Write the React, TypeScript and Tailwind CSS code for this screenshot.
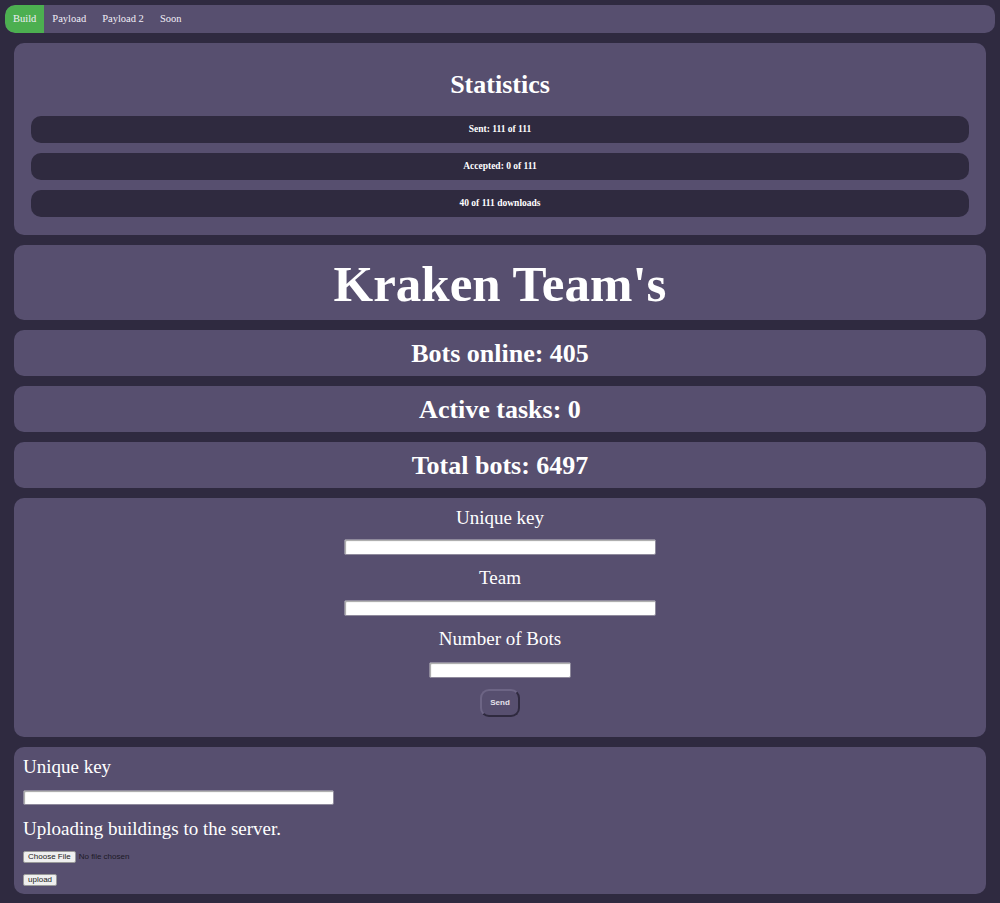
import React from "react";

const serif = { fontFamily: '"Liberation Serif", "Times New Roman", serif' };
const sans = { fontFamily: '"Liberation Sans", Arial, sans-serif' };

const tabs = ["Build", "Payload", "Payload 2", "Soon"];
const stats = ["Sent: 111 of 111", "Accepted: 0 of 111", "40 of 111 downloads"];
const counters = ["Bots online: 405", "Active tasks: 0", "Total bots: 6497"];

function TextInput({ className }: { className: string }) {
  return (
    <input
      type="text"
      className={`bg-white rounded-[2px] border border-[#8f8a9c] shadow-[inset_1px_1px_1px_rgba(0,0,0,0.35)] outline-none ${className}`}
    />
  );
}

export default function App() {
  return (
    <div className="min-h-[903px] bg-[#2f2a40] text-white pt-[5px] pb-[10px]" style={serif}>
      {/* nav */}
      <nav className="mx-[5px] h-[28px] bg-[#574f6f] rounded-[10px] flex items-stretch overflow-hidden text-[10.5px]">
        {tabs.map((t, i) => (
          <a
            key={t}
            className={`flex items-center px-[8px] text-[#f1eef7] ${i === 0 ? "bg-[#4caf50] rounded-l-[10px]" : ""}`}
          >
            {t}
          </a>
        ))}
      </nav>

      <div className="mx-[14px] mt-[10px] flex flex-col gap-[10px]">
        {/* statistics */}
        <section className="bg-[#574f6f] rounded-[10px] pt-[26px] pb-[18px] px-[17px]">
          <h2 className="h-[32px] leading-[32px] text-center text-[26px] font-bold">Statistics</h2>
          <div className="mt-[15px] flex flex-col gap-[10px]">
            {stats.map((s) => (
              <div
                key={s}
                className="h-[27px] bg-[#2f2a3f] rounded-[10px] flex items-center justify-center text-[9.5px] font-bold"
              >
                {s}
              </div>
            ))}
          </div>
        </section>

        {/* title */}
        <section className="h-[75px] bg-[#574f6f] rounded-[10px] flex items-center justify-center">
          <h1 className="text-[51px] font-bold leading-none pt-[3px]">Kraken Team's</h1>
        </section>

        {counters.map((c) => (
          <section key={c} className="h-[46px] bg-[#574f6f] rounded-[10px] flex items-center justify-center">
            <h2 className="text-[26px] font-bold leading-none pt-[1px]">{c}</h2>
          </section>
        ))}

        {/* task form */}
        <section className="bg-[#574f6f] rounded-[10px] pt-[8px] pb-[20px] flex flex-col items-center text-[19px]">
          <label className="h-[24px] leading-[24px]">Unique key</label>
          <TextInput className="mt-[9px] w-[312px] h-[16px]" />
          <label className="mt-[11px] h-[24px] leading-[24px]">Team</label>
          <TextInput className="mt-[10px] w-[312px] h-[16px]" />
          <label className="mt-[11px] h-[24px] leading-[24px]">Number of Bots</label>
          <TextInput className="mt-[11px] w-[142px] h-[16px]" />
          <button
            className="mt-[11px] w-[40px] h-[28px] rounded-[9px] border-2 border-t-[#6d6585] border-l-[#6d6585] border-r-[#2f2a3f] border-b-[#2f2a3f] bg-[#574f6f] text-[8px] font-bold text-[#e6e3ec]"
            style={sans}
          >
            Send
          </button>
        </section>

        {/* upload */}
        <section className="bg-[#574f6f] rounded-[10px] pt-[8px] pb-[8px] px-[9px] flex flex-col items-start text-[19px]">
          <label className="h-[24px] leading-[24px]">Unique key</label>
          <TextInput className="mt-[11px] w-[311px] h-[15px]" />
          <p className="mt-[12px] h-[24px] leading-[24px]">Uploading buildings to the server.</p>
          <div className="mt-[10px] flex items-center gap-[3px] text-[8px]" style={sans}>
            <button className="h-[12px] px-[4px] bg-[#efefef] text-[#222] border border-[#9a9a9a] rounded-[2px] leading-none">
              Choose File
            </button>
            <span className="text-[#1d1a26]">No file chosen</span>
          </div>
          <button
            className="mt-[11px] h-[12px] px-[4px] bg-[#efefef] text-[#222] border border-[#9a9a9a] rounded-[2px] text-[8px] leading-none"
            style={sans}
          >
            upload
          </button>
        </section>
      </div>
    </div>
  );
}
